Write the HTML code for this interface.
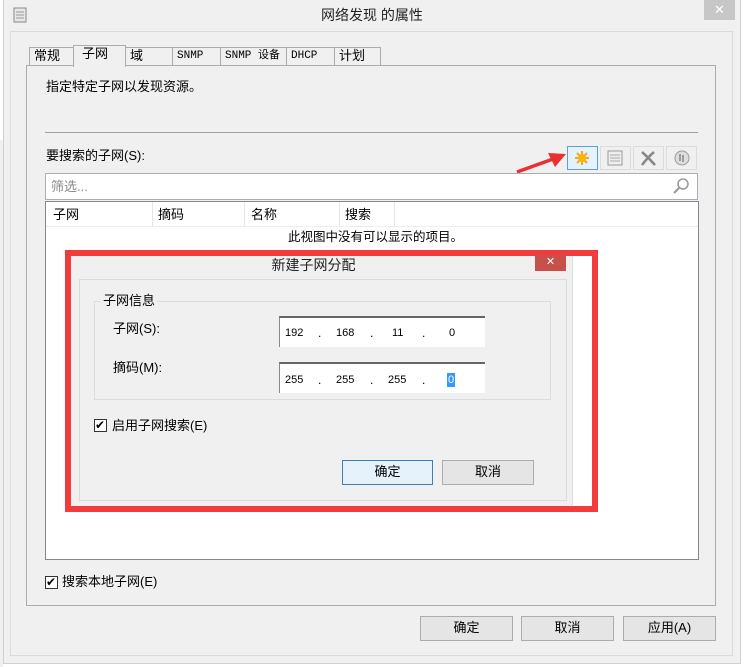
<!DOCTYPE html>
<html><head><meta charset="utf-8"><style>
*{box-sizing:border-box;margin:0;padding:0}
body{width:744px;height:667px;background:#fff;position:relative;overflow:hidden;font-family:"Liberation Sans","Noto Sans CJK SC","WenQuanYi Zen Hei",sans-serif;font-size:12px;color:#000}
.a{position:absolute}
.t{position:absolute;white-space:nowrap;line-height:14px}
.btn{position:absolute;background:#e5e5e5;border:1px solid #acacac;text-align:center;line-height:22px}
.tab{position:absolute;top:47px;height:18px;border:1px solid #acacac;border-bottom:none;background:#f0f0f0;line-height:16px;padding-left:4px;font-size:13px}
.tb{position:absolute;top:146px;width:31px;height:24px;border:1px solid #dcdcdc;background:#f0f0f0}
.cb{position:absolute;width:13px;height:13px;border:1px solid #333;background:#fff}
.vd{position:absolute;top:202px;width:1px;height:24px;background:#e5e5e5}
</style></head><body>
<div class="a" style="left:0;top:0;width:744px;height:667px;background:#f0f0f0"></div>
<div class="a" style="left:0;top:0;width:4px;height:140px;background:#fff"></div>
<div class="a" style="left:3px;top:0;width:1px;height:667px;background:#d0d0d0"></div>
<div class="a" style="left:740px;top:0;width:4px;height:667px;background:#fff;border-left:1px solid #d0d0d0"></div>
<div class="a" style="left:3px;top:663px;width:738px;height:4px;background:#fff;border-top:1px solid #d0d0d0"></div>
<!-- title -->
<svg class="a" style="left:13px;top:7px" width="14" height="16"><rect x="1" y="1" width="12" height="14" fill="#e8e8e8" stroke="#888"/><path d="M3 5h8M3 8h8M3 11h8" stroke="#999"/></svg>
<div class="t" style="left:0;width:744px;text-align:center;top:8px;font-size:14px;color:#222">网络发现 的属性</div>
<div class="a" style="left:704px;top:0;width:31px;height:20px;background:#c7c7c7;color:#fff;text-align:center;font-size:13px;line-height:20px">✕</div>
<div class="a" style="left:10px;top:31px;width:723px;height:1px;background:#dadada"></div>
<div class="a" style="left:10px;top:31px;width:1px;height:625px;background:#dadada"></div>
<div class="a" style="left:732px;top:31px;width:1px;height:625px;background:#dadada"></div>
<div class="a" style="left:10px;top:655px;width:723px;height:1px;background:#dadada"></div>
<!-- tabs -->
<div class="tab" style="left:29px;width:45px">常规</div>
<div class="tab" style="left:125px;width:48px">域</div>
<div class="tab" style="left:172px;width:49px;font-family:'Liberation Mono',monospace;font-size:11px">SNMP</div>
<div class="tab" style="left:220px;width:67px;font-family:'Liberation Mono','Noto Sans CJK SC',monospace;font-size:11px">SNMP 设备</div>
<div class="tab" style="left:286px;width:49px;font-family:'Liberation Mono',monospace;font-size:11px">DHCP</div>
<div class="tab" style="left:334px;width:47px">计划</div>
<div class="a" style="left:26px;top:65px;width:690px;height:541px;background:#fff;border:1px solid #acacac"></div>
<div class="a" style="left:27px;top:66px;width:688px;height:539px;background:#f0f0f0"></div>
<div class="tab" style="left:73px;top:45px;width:53px;height:22px;background:#f0f0f0;padding-left:8px;border-bottom:none">子网</div>
<div class="t" style="left:46px;top:80px;font-size:13px">指定特定子网以发现资源。</div>
<div class="a" style="left:45px;top:132px;width:653px;height:1px;background:#a0a0a0"></div>
<div class="t" style="left:46px;top:149px;font-size:13px">要搜索的子网(S):</div>
<!-- toolbar -->
<div class="tb" style="left:567px;border-color:#5a9ee0;background:#e5f1fb"></div>
<svg class="a" style="left:572px;top:149px" width="20" height="18"><g stroke="#f5a623" stroke-width="2"><path d="M10 2v14M3 9h14M5 4l10 10M15 4l-10 10"/></g><circle cx="10" cy="9" r="4" fill="#f7b500"/></svg>
<div class="tb" style="left:600px"></div>
<svg class="a" style="left:606px;top:150px" width="18" height="16"><rect x="2" y="1" width="14" height="14" fill="#eee" stroke="#999"/><path d="M4 5h10M4 8h10M4 11h10" stroke="#aaa"/></svg>
<div class="tb" style="left:633px"></div>
<svg class="a" style="left:639px;top:150px" width="18" height="16"><path d="M3 2q7 6 13 13M15 2q-6 5-12 13" stroke="#888" stroke-width="2.5" fill="none"/></svg>
<div class="tb" style="left:666px"></div>
<svg class="a" style="left:673px;top:149px" width="18" height="18"><circle cx="9" cy="9" r="7" fill="#ddd" stroke="#999"/><path d="M7 5v7M10 6v7" stroke="#888" stroke-width="1.5"/></svg>
<!-- red arrow -->
<svg class="a" style="left:510px;top:145px" width="60" height="32"><path d="M7 27L43 14" stroke="#e83030" stroke-width="3.5"/><path d="M56 9L38 8L45 22Z" fill="#e83030"/></svg>
<!-- filter -->
<div class="a" style="left:45px;top:173px;width:653px;height:27px;background:#fff;border:1px solid #abadb3"></div>
<div class="t" style="left:51px;top:180px;color:#888;font-size:13px">筛选...</div>
<svg class="a" style="left:672px;top:177px" width="18" height="18"><circle cx="11" cy="7" r="5" fill="none" stroke="#999" stroke-width="1.5"/><path d="M7 11L2 16" stroke="#999" stroke-width="2"/></svg>
<!-- list -->
<div class="a" style="left:45px;top:201px;width:654px;height:359px;background:#fff;border:1px solid #828790"></div>
<div class="t" style="left:53px;top:208px;font-size:13px">子网</div>
<div class="t" style="left:158px;top:208px;font-size:13px">摘码</div>
<div class="t" style="left:251px;top:208px;font-size:13px">名称</div>
<div class="t" style="left:345px;top:208px;font-size:13px">搜索</div>
<div class="vd" style="left:152px"></div><div class="vd" style="left:244px"></div><div class="vd" style="left:339px"></div><div class="vd" style="left:394px"></div>
<div class="a" style="left:46px;top:226px;width:652px;height:1px;background:#eee"></div>
<div class="t" style="left:288px;top:230px;font-size:12.5px">此视图中没有可以显示的项目。</div>
<!-- dialog -->
<div class="a" style="left:65px;top:250px;width:533px;height:262px;border:6px solid #f03c3c;background:#fff"></div>
<div class="a" style="left:71px;top:256px;width:502px;height:250px;background:#f0f0f0;border-right:1px solid #dcdcdc"></div>
<div class="t" style="left:71px;width:485px;text-align:center;top:258px;font-size:14px;color:#222">新建子网分配</div>
<div class="a" style="left:535px;top:255px;width:31px;height:16px;background:#c7504a;color:#fff;text-align:center;font-size:11px;line-height:15px">✕</div>
<div class="a" style="left:79px;top:279px;width:488px;height:222px;border:1px solid #dadada"></div>
<div class="a" style="left:94px;top:301px;width:457px;height:99px;border:1px solid #dcdcdc"></div>
<div class="t" style="left:101px;top:294px;background:#f0f0f0;padding:0 2px;font-size:13px">子网信息</div>
<div class="t" style="left:113px;top:322px;font-size:13px">子网(S):</div>
<div class="t" style="left:113px;top:361px;font-size:13px">摘码(M):</div>
<div class="a" style="left:279px;top:316px;width:206px;height:31px;background:#fff;border-top:2px solid #666;border-left:1px solid #888"></div>
<div class="a" style="left:279px;top:362px;width:206px;height:31px;background:#fff;border-top:2px solid #666;border-left:1px solid #888"></div>
<div class="t" style="left:285px;top:326px;font-size:11px">192</div><div class="t" style="left:318px;top:326px">.</div>
<div class="t" style="left:336px;top:326px;font-size:11px">168</div><div class="t" style="left:370px;top:326px">.</div>
<div class="t" style="left:392px;top:326px;font-size:11px">11</div><div class="t" style="left:422px;top:326px">.</div>
<div class="t" style="left:449px;top:326px;font-size:11px">0</div>
<div class="t" style="left:285px;top:373px;font-size:11px">255</div><div class="t" style="left:318px;top:373px">.</div>
<div class="t" style="left:336px;top:373px;font-size:11px">255</div><div class="t" style="left:370px;top:373px">.</div>
<div class="t" style="left:388px;top:373px;font-size:11px">255</div><div class="t" style="left:422px;top:373px">.</div>
<div class="t" style="left:447px;top:373px;font-size:11px;background:#3399ff;color:#fff;padding:0 1px">0</div>
<div class="cb" style="left:94px;top:419px"></div><div class="t" style="left:95px;top:418px;font-size:12px">✔</div>
<div class="t" style="left:112px;top:419px;font-size:13px">启用子网搜索(E)</div>
<div class="btn" style="left:342px;top:460px;width:91px;height:25px;border-color:#3c7fb1;background:#e5f1fb;font-size:13px">确定</div>
<div class="btn" style="left:442px;top:460px;width:92px;height:25px;font-size:13px">取消</div>
<!-- bottom -->
<div class="cb" style="left:45px;top:576px"></div><div class="t" style="left:46px;top:575px">✔</div>
<div class="t" style="left:62px;top:575px;font-size:13px">搜索本地子网(E)</div>
<div class="btn" style="left:420px;top:616px;width:93px;height:25px;font-size:13px">确定</div>
<div class="btn" style="left:521px;top:616px;width:93px;height:25px;font-size:13px">取消</div>
<div class="btn" style="left:623px;top:616px;width:93px;height:25px;font-size:13px">应用(A)</div>
</body></html>
